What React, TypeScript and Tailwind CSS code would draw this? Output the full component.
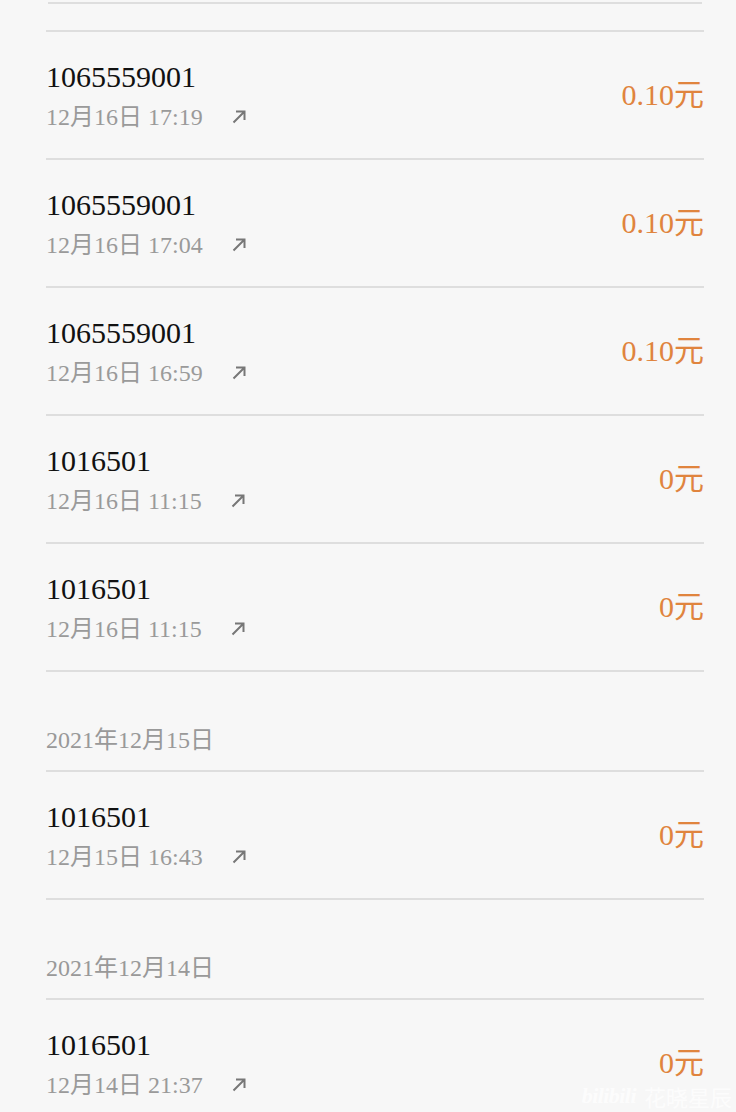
const serif = "font-['Liberation_Serif','Noto_Sans_CJK_SC',serif]";

type Row = { kind: 'row'; number: string; time: string; fee: string } | { kind: 'date'; label: string };

const rows: Row[] = [
	{ kind: 'row', number: '1065559001', time: '12月16日 17:19', fee: '0.10元' },
	{ kind: 'row', number: '1065559001', time: '12月16日 17:04', fee: '0.10元' },
	{ kind: 'row', number: '1065559001', time: '12月16日 16:59', fee: '0.10元' },
	{ kind: 'row', number: '1016501', time: '12月16日 11:15', fee: '0元' },
	{ kind: 'row', number: '1016501', time: '12月16日 11:15', fee: '0元' },
	{ kind: 'date', label: '2021年12月15日' },
	{ kind: 'row', number: '1016501', time: '12月15日 16:43', fee: '0元' },
	{ kind: 'date', label: '2021年12月14日' },
	{ kind: 'row', number: '1016501', time: '12月14日 21:37', fee: '0元' },
];

function OutgoingArrow() {
	return (
		<svg width="16" height="16" viewBox="0 0 16 16" className="text-[#777777]">
			<path d="M2.5 13.5 L13 3 M5 2.5 H13.5 V11" fill="none" stroke="currentColor" strokeWidth="2" />
		</svg>
	);
}

export default function App() {
	return (
		<div className={`relative h-[1112px] overflow-hidden bg-[#f7f7f7] ${serif}`}>
			<div className="ml-[48px] mr-[34px] h-[4px] border-b-2 border-[#dedede]" />
			<div className="ml-[46px] mr-[32px] mt-[26px] border-t-2 border-[#dedede]">
				{rows.map((row, i) =>
					row.kind === 'date' ? (
						<div
							key={i}
							className="flex h-[100px] items-end border-b-2 border-[#dedede] pb-[14px] text-[24px] leading-[32px] text-[#999999]"
						>
							{row.label}
						</div>
					) : (
						<div
							key={i}
							className="flex h-[128px] items-center justify-between border-b-2 border-[#dedede]"
						>
							<div className="flex flex-col">
								<span className="text-[30px] leading-[38px] text-[#111111]">{row.number}</span>
								<div className="mt-[5px] flex items-center">
									<span className="text-[24px] leading-[32px] text-[#9a9a9a]">{row.time}</span>
									<span className="ml-[28px] mt-[1px]">
										<OutgoingArrow />
									</span>
								</div>
							</div>
							<span className="pb-[2px] text-[30px] text-[#e0843e]">{row.fee}</span>
						</div>
					),
				)}
			</div>
			<div className="absolute bottom-[2px] right-[4px] flex items-end gap-2 text-[22px] leading-[28px] text-white/70">
				<span className="font-bold italic tracking-tight">bilibili</span>
				<span className="font-['Noto_Sans_CJK_SC',sans-serif]">花晓星辰</span>
			</div>
		</div>
	);
}
